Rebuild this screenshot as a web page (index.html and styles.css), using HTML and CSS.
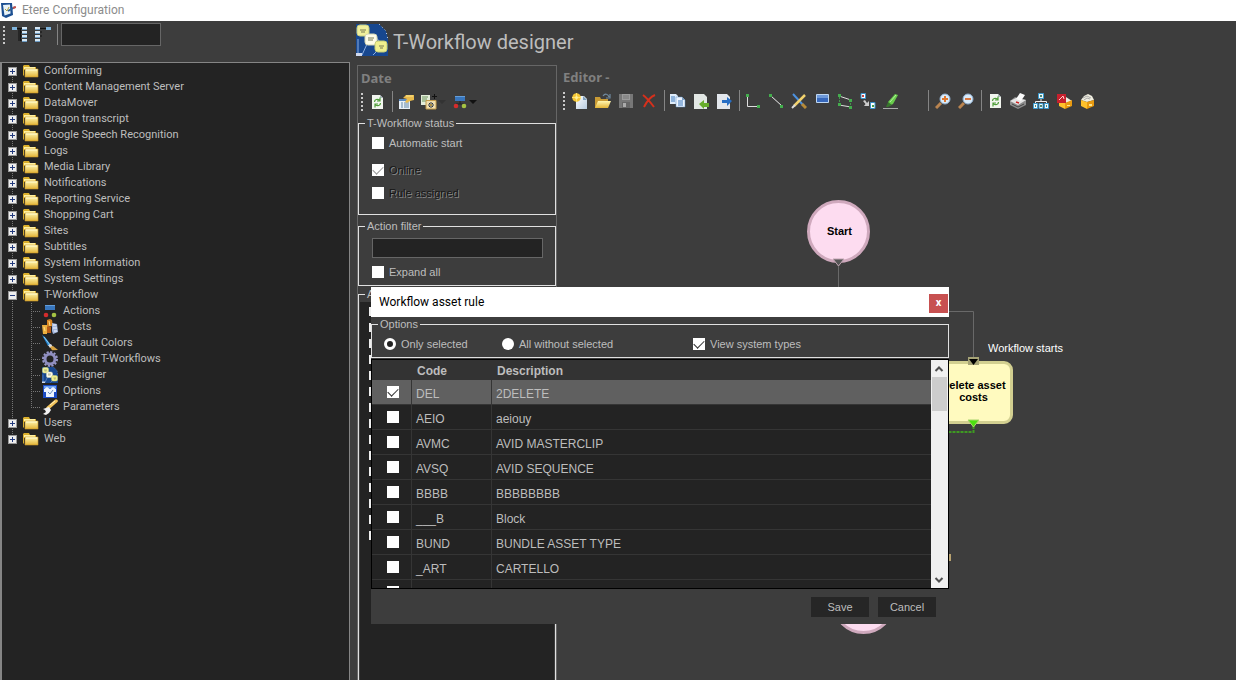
FILE: index.html
```html
<!DOCTYPE html>
<html lang="en">
<head>
<meta charset="utf-8">
<title>Etere Configuration</title>
<link rel="stylesheet" href="styles.css">
</head>
<body>
<svg class="sprite" aria-hidden="true">
  <defs>
    <linearGradient id="gold" x1="0" y1="0" x2="0" y2="1"><stop offset="0" stop-color="#fff6b0"/><stop offset="1" stop-color="#e3b437"/></linearGradient>
    <linearGradient id="sheet" x1="0" y1="0" x2="1" y2="1"><stop offset="0" stop-color="#fff"/><stop offset="1" stop-color="#b8cce0"/></linearGradient>
  </defs>
  <symbol id="app" viewBox="0 0 16 16"><path d="M1 1l11 0 1 12-7 3-4-2z" fill="#1c4f91"/><path d="M3 3l7-.5.5 9-6 2z" fill="#eaf3f6"/><path d="M5 7l2 2 2-4" stroke="#b3a13a" fill="none"/><path d="M8 9l7-4" stroke="#2b5f99" stroke-width="2"/><path d="M13 6l3-1" stroke="#c4504a" stroke-width="2"/></symbol>
  <symbol id="expand" viewBox="0 0 16 16"><path d="M5 1.500h6M7 2v12M8.500 2v12M8 5h4M8 9h4M8 13h4" stroke="#111" fill="none"/><path d="M0 0h5v3H0z" fill="#7fb4dc"/><path d="M10 0h5v3h-5zM10 4h5v3h-5zM10 8h5v3h-5zM10 12h5v3h-5z" fill="#d7e8f4"/><path d="M10 2h5v1h-5zM10 6h5v1h-5zM10 10h5v1h-5zM10 14h5v1h-5z" fill="#6d9cc4"/></symbol>
  <symbol id="collapse" viewBox="0 0 16 16"><path d="M5 1.500h6M5 5h2M5 9h2" stroke="#111" fill="none"/><path d="M11 0h5v3h-5z" fill="#7fb4dc"/><path d="M0 0h5v3H0zM0 4h5v3H0zM0 8h5v3H0zM0 12h5v3H0z" fill="#d7e8f4"/><path d="M0 2h5v1H0zM0 6h5v1H0zM0 10h5v1H0zM0 14h5v1H0z" fill="#6d9cc4"/></symbol>
  <symbol id="folder" viewBox="0 0 16 16"><path d="M0 3l1-1h5l1 2h6v3H1v6L0 12z" fill="#d9ae2c"/><path d="M1 4h11v2H1z" fill="#fff0a0"/><path d="M2 6h13v8H2z" fill="url(#gold)" stroke="#c7962a" stroke-width=".6"/><path d="M3 7h11" stroke="#fffbd2"/></symbol>
  <symbol id="action" viewBox="0 0 16 16"><path d="M8 6v4M4 10h8" stroke="#222"/><path d="M3 2h10v5H3z" fill="#3876bd"/><path d="M3 2h10v1H3z" fill="#659ed9"/><circle cx="4" cy="12" r="2.300" fill="#d42c2c"/><circle cx="12" cy="12" r="2.300" fill="#a5c343"/></symbol>
  <symbol id="costs" viewBox="0 0 16 16"><path d="M5 1l3-1 2 1 1 6-6 1z" fill="#d88522"/><path d="M0 6h5v9H1z" fill="#ebb040"/><path d="M5 8h4v6H5z" fill="#b85b16"/><path d="M7 2l1 5M2 8l1 4" stroke="#ffe087"/><path d="M10 4l5 1 1 8-5 2-1-3z" fill="#a5b8dd"/><path d="M11 6h3M11 9h4M12 12h3" stroke="#f5f8ff"/></symbol>
  <symbol id="brush" viewBox="0 0 16 16"><path d="M0 0l3 2 6 8-3 1z" fill="#2383cf"/><path d="M2 2l6 8" stroke="#91cdf2"/><path d="M6 10l3-1 2 3-3 1z" fill="#ddd"/><path d="M8 12l3-1 5 4-6 .2z" fill="#d9a440"/></symbol>
  <symbol id="gear" viewBox="0 0 16 16"><circle cx="8" cy="8" r="7" fill="none" stroke="#9a99ca" stroke-width="2" stroke-dasharray="2.200 1.460"/><circle cx="8" cy="8" r="5" fill="none" stroke="#8f8ec0" stroke-width="3"/></symbol>
  <symbol id="flow" viewBox="0 0 32 32"><path d="M0 0h23l7 7 2 8v17H0z" fill="#17478f"/><path d="M6 31L11 20M17 31l8-8M2 30V15M24 18l-7-8" stroke="#8caee0" fill="none"/><path d="M23 0l7 7 2 9" stroke="#cdddec" stroke-dasharray="1 3" fill="none"/><rect x="1" y="1" width="12" height="11" rx="3" fill="#f0f09c" stroke="#c6cb81"/><rect x="9" y="10" width="12" height="11" rx="3" fill="#fdfce8" stroke="#d4d6b4"/><rect x="19" y="17" width="12" height="11" rx="3" fill="#eff08d" stroke="#c5cc77"/><path d="M4 6h6M5 8h4M12 14h6M12 16h5M23 22h5M24 24h3" stroke="#777853"/><path d="M0 29h6v3H0z" fill="#cfd8ee"/></symbol>
  <symbol id="options" viewBox="0 0 16 16"><path d="M1 2h14v13H1z" fill="#1d4dc5"/><path d="M2 3h12v2H2z" fill="#6aa0f0"/><path d="M2 6l3-2 3 2 3-2 3 2v3h-2v5H4V9H2z" fill="#eef5ff"/><path d="M6 9l2 2 3-4" stroke="#6a8fc2" fill="none"/></symbol>
  <symbol id="wrench" viewBox="0 0 16 16"><path d="M6 9L14 2" stroke="#f2c45b" stroke-width="3.500" stroke-linecap="round"/><path d="M8 6l5-4" stroke="#fff3c4"/><path d="M1 10l3-1 3-1 2 3-2 3-3 2-3-1 3-2-1-2z" fill="#f2f2f2"/></symbol>
  <symbol id="refresh" viewBox="0 0 16 16"><path d="M3 1h8l3 3v11H3z" fill="#f1f5ee"/><path d="M11 1l3 3h-3z" fill="#aab8c0"/><path d="M5.500 8c0-3 3-3 5-2M11 3.500V7H8M11.500 9c0 3-3 3-5 2M6 13.500V10h3" stroke="#4e9d38" fill="none" stroke-width="1.200"/></symbol>
  <symbol id="props" viewBox="0 0 16 16"><path d="M1 5h11v10H1z" fill="#e9f0f7"/><path d="M1 5h11v2H1z" fill="#5d8cc2"/><path d="M3 9h2M6 9h5M3 11h2M6 11h5M3 13h2M6 13h5" stroke="#6388a8"/><path d="M5 4l3-3h8v5l-4 1-3 2-2-1 2-3z" fill="#e9bb4d"/><path d="M8 2h7" stroke="#ffe78d"/></symbol>
  <symbol id="newact" viewBox="0 0 16 16"><path d="M0 1h9v10H0z" fill="#e4edda"/><path d="M1 3h6M1 5h5M1 7h4" stroke="#6c945d"/><path d="M5 6.500h10v8.500H5z" fill="#f1dfae" stroke="#c29a4a"/><path d="M10 8v6M7 11h6M8 9l4 4M12 9l-4 4" stroke="#273347"/><circle cx="10" cy="11" r="1" fill="#dfb444"/><path d="M13.500 0v5M11 2.500h5" stroke="#111"/></symbol>
  <symbol id="new" viewBox="0 0 16 16"><path d="M4 3h8l3 3v10H4z" fill="url(#sheet)"/><path d="M11 3v4h4z" fill="#7d9fbd"/><circle cx="4.500" cy="4.500" r="4.300" fill="#f5c635"/><path d="M4.500 0v9M0 4.500h9" stroke="#ffe66f"/><circle cx="4.500" cy="4.500" r="1.500" fill="#fff099"/></symbol>
  <symbol id="open" viewBox="0 0 16 16"><path d="M0 4h5l1 2h7v9H0z" fill="#c99b35"/><path d="M3 8h13l-3 7H0z" fill="url(#gold)"/><path d="M8 3c2-3 5-2 6 1M15 1v4h-4" stroke="#708aa0" fill="none" stroke-width="1.200"/></symbol>
  <symbol id="save" viewBox="0 0 16 16"><path d="M1 1h14v14H1z" fill="#777"/><path d="M4 1h8v6H4z" fill="#9b9b9b"/><path d="M4 9h8v6H4z" fill="#666"/><path d="M5 10h3v4H5z" fill="#aaa"/><path d="M5 3h6M5 5h6" stroke="#777"/></symbol>
  <symbol id="delete" viewBox="0 0 16 16"><path d="M2 2c4 3 8 8 11 12M14 2C9 4 6 8 3 14" stroke="#d5301c" stroke-width="2" fill="none"/></symbol>
  <symbol id="copy" viewBox="0 0 16 16"><path d="M0 1h6l2 2v8H0z" fill="#dfecfa"/><path d="M6 4h6l3 3v7H6z" fill="#eef5ff" stroke="#5b8cc0" stroke-width=".5"/><path d="M1 4h4M1 6h4M1 8h4M8 8h5M8 10h5M8 12h5" stroke="#3d78bb"/><path d="M12 4v3h3z" fill="#7d9fc2"/></symbol>
  <symbol id="import" viewBox="0 0 16 16"><path d="M1 1h10l3 3v12H1z" fill="#e2e7e4"/><path d="M6 11l5-4v3h5v4h-5v2z" fill="#68ad2c"/></symbol>
  <symbol id="export" viewBox="0 0 16 16"><path d="M1 1h10l3 3v12H1z" fill="#e3e7ec"/><path d="M16 8l-5-4v3H6v3h5v3z" fill="#276ec4"/></symbol>
  <symbol id="corner" viewBox="0 0 16 16"><path d="M2.500 3v10.500H14" stroke="#ddd" fill="none"/><path d="M1 1h3v3H1zM12 12h3v3h-3z" fill="#43ad4d"/></symbol>
  <symbol id="line" viewBox="0 0 16 16"><path d="M3 3l11 10" stroke="#eee"/><path d="M1 1h3v3H1zM12 12h3v3h-3z" fill="#43ad4d"/></symbol>
  <symbol id="tools" viewBox="0 0 16 16"><path d="M2 1l11 12" stroke="#4c91df" stroke-width="2"/><path d="M11 11l4 4" stroke="#b68a38" stroke-width="3"/><path d="M3 13L14 2" stroke="#f2d26d" stroke-width="2.500"/><path d="M1 15l3-3" stroke="#ddd" stroke-width="2"/></symbol>
  <symbol id="box" viewBox="0 0 16 16"><path d="M2.500 1.500h12v8h-12z" fill="#3768bc" stroke="#bed7f2"/><path d="M3 2h11v3H3z" fill="#6e99d9"/></symbol>
  <symbol id="poly" viewBox="0 0 16 16"><path d="M2 3l12 4M2 12l12 2" stroke="#ddd"/><path d="M2.500 4v8M13.500 7v7" stroke="#46944e" stroke-dasharray="2 1"/><path d="M1 1h3v3H1zM12 6h3v3h-3zM1 10h3v3H1zM12 13h3v3h-3z" fill="#43ad4d"/></symbol>
  <symbol id="transfer" viewBox="0 0 16 16"><path d="M1 .500h4.500v5H1zM10.500 9.500H15v6h-4.500z" fill="#fff" stroke="#3b91c9"/><path d="M2 2h2v2H2z" fill="#c34444"/><path d="M12 12h2v2h-2z" fill="#479e46"/><path d="M3 8l2-1 2 3 2-2v5H4l1.500-2z" fill="#ccc"/></symbol>
  <symbol id="marker" viewBox="0 0 16 16"><path d="M5 9L12 1l3 1-5 9-4 2z" fill="#68cc4b"/><path d="M7 9l6-7" stroke="#b0f29d"/><path d="M5 9l4 3-4 2H3z" fill="#38752d"/><path d="M0 15.500h15" stroke="#aaa"/></symbol>
  <symbol id="zoomin" viewBox="0 0 16 16"><path d="M6 10l-5 5" stroke="#b98450" stroke-width="3"/><circle cx="10" cy="6" r="5" fill="#d9ebfa" stroke="#8daccc"/><path d="M10 3v6M7 6h6" stroke="#dd7830" stroke-width="2"/></symbol>
  <symbol id="zoomout" viewBox="0 0 16 16"><path d="M6 10l-5 5" stroke="#b98450" stroke-width="3"/><circle cx="10" cy="6" r="5" fill="#d9ebfa" stroke="#8daccc"/><path d="M7 6h6" stroke="#d87843" stroke-width="2"/></symbol>
  <symbol id="print" viewBox="0 0 16 16"><path d="M0 8l5-4 11 3v5l-8 4-8-4z" fill="#8d8d8d"/><path d="M0 8l6-3 10 2-8 5z" fill="#e4e4e4"/><path d="M6 6l4-6 5 2-4 6z" fill="#fafafa"/><path d="M2 11l6 3 6-3" stroke="#444" fill="none"/><path d="M6 9l3 1" stroke="#c22" stroke-width="1.500"/></symbol>
  <symbol id="tree" viewBox="0 0 16 16"><path d="M8 6v3M2.500 10V8.500h11V10" stroke="#eee" fill="none"/><path d="M5.500.500h5v5h-5zM.500 10.500h4v5h-4zM6 10.500h4v5H6zM11.500 10.500h4v5h-4z" fill="#eef8fc" stroke="#399bd0"/><path d="M7 2h2v2H7zM2 12h1v2H2zM7 12h2v2H7zM13 12h1v2h-1z" fill="#52856d"/></symbol>
  <symbol id="cube" viewBox="0 0 16 16"><path d="M2 7l3-4 4-2 4 2 2 4-7 2z" fill="#f0eee0"/><path d="M4 5l4-2 4 2M5 7l3-2 3 1" stroke="#aaa" fill="none"/><path d="M2 7l6 2v7l-6-3z" fill="#ffc12b"/><path d="M8 9l7-2v6l-7 3z" fill="#e89a10"/><path d="M10 11h3v2h-3z" fill="#ffe48a"/></symbol>
  <symbol id="redcube" viewBox="0 0 16 16"><path d="M4 8l6-4 6 4-6 2z" fill="#f0eee0"/><path d="M3 8l6 2v6l-6-3z" fill="#ffc12b"/><path d="M9 10l7-3v6l-7 3z" fill="#e89a10"/><path d="M11 12h3v1h-3z" fill="#ffe48a"/><path d="M1 1h9v9H1z" fill="#c5202d"/><path d="M3 7l4-4 1 3" stroke="#ffd2ce" fill="none"/></symbol>
</svg>

<header class="titlebar"><svg class="icon"><use href="#app"/></svg><span>Etere Configuration</span></header>

<main class="workspace">
  <aside class="sidebar">
    <div class="side-tools">
      <span class="grip"></span>
      <button class="tool" aria-label="Expand tree"><svg class="icon"><use href="#expand"/></svg></button>
      <button class="tool" aria-label="Collapse tree"><svg class="icon"><use href="#collapse"/></svg></button>
      <span class="sep"></span>
      <input class="field" type="text" aria-label="Search">
    </div>
    <ul class="tree">
      <li><a class="row" href="#"><i class="knob plus"></i><svg class="icon"><use href="#folder"/></svg>Conforming</a></li>
      <li><a class="row" href="#"><i class="knob plus"></i><svg class="icon"><use href="#folder"/></svg>Content Management Server</a></li>
      <li><a class="row" href="#"><i class="knob plus"></i><svg class="icon"><use href="#folder"/></svg>DataMover</a></li>
      <li><a class="row" href="#"><i class="knob plus"></i><svg class="icon"><use href="#folder"/></svg>Dragon transcript</a></li>
      <li><a class="row" href="#"><i class="knob plus"></i><svg class="icon"><use href="#folder"/></svg>Google Speech Recognition</a></li>
      <li><a class="row" href="#"><i class="knob plus"></i><svg class="icon"><use href="#folder"/></svg>Logs</a></li>
      <li><a class="row" href="#"><i class="knob plus"></i><svg class="icon"><use href="#folder"/></svg>Media Library</a></li>
      <li><a class="row" href="#"><i class="knob plus"></i><svg class="icon"><use href="#folder"/></svg>Notifications</a></li>
      <li><a class="row" href="#"><i class="knob plus"></i><svg class="icon"><use href="#folder"/></svg>Reporting Service</a></li>
      <li><a class="row" href="#"><i class="knob plus"></i><svg class="icon"><use href="#folder"/></svg>Shopping Cart</a></li>
      <li><a class="row" href="#"><i class="knob plus"></i><svg class="icon"><use href="#folder"/></svg>Sites</a></li>
      <li><a class="row" href="#"><i class="knob plus"></i><svg class="icon"><use href="#folder"/></svg>Subtitles</a></li>
      <li><a class="row" href="#"><i class="knob plus"></i><svg class="icon"><use href="#folder"/></svg>System Information</a></li>
      <li><a class="row" href="#"><i class="knob plus"></i><svg class="icon"><use href="#folder"/></svg>System Settings</a></li>
      <li><a class="row" href="#"><i class="knob"></i><svg class="icon"><use href="#folder"/></svg>T-Workflow</a>
        <ul class="branch">
          <li><a class="leaf" href="#"><svg class="icon"><use href="#action"/></svg>Actions</a></li>
          <li><a class="leaf" href="#"><svg class="icon"><use href="#costs"/></svg>Costs</a></li>
          <li><a class="leaf" href="#"><svg class="icon"><use href="#brush"/></svg>Default Colors</a></li>
          <li><a class="leaf" href="#"><svg class="icon"><use href="#gear"/></svg>Default T-Workflows</a></li>
          <li><a class="leaf" href="#"><svg class="icon"><use href="#flow"/></svg>Designer</a></li>
          <li><a class="leaf" href="#"><svg class="icon"><use href="#options"/></svg>Options</a></li>
          <li><a class="leaf" href="#"><svg class="icon"><use href="#wrench"/></svg>Parameters</a></li>
        </ul>
      </li>
      <li><a class="row" href="#"><i class="knob plus"></i><svg class="icon"><use href="#folder"/></svg>Users</a></li>
      <li><a class="row" href="#"><i class="knob plus"></i><svg class="icon"><use href="#folder"/></svg>Web</a></li>
    </ul>
  </aside>

  <section class="designer">
    <div class="heading"><svg class="logo"><use href="#flow"/></svg><h1>T-Workflow designer</h1></div>
    <div class="columns">
      <div class="panel">
        <h2>Date</h2>
        <div class="tools">
          <span class="grip"></span>
          <button class="tool" aria-label="Refresh"><svg class="icon"><use href="#refresh"/></svg></button>
          <span class="sep"></span>
          <button class="tool" aria-label="Properties"><svg class="icon"><use href="#props"/></svg></button>
          <button class="tool" aria-label="New action"><svg class="icon"><use href="#newact"/></svg></button>
          <i class="caret off"></i>
          <button class="tool" aria-label="Actions"><svg class="icon"><use href="#action"/></svg></button>
          <i class="caret"></i>
        </div>
        <fieldset class="group status">
          <legend>T-Workflow status</legend>
          <label class="auto"><input type="checkbox">Automatic start</label>
          <label class="dim"><input type="checkbox" checked disabled>Online</label>
          <label class="dim"><input type="checkbox" disabled>Rule assigned</label>
        </fieldset>
        <fieldset class="group filter">
          <legend>Action filter</legend>
          <input class="field" type="text" aria-label="Action filter">
          <label><input type="checkbox">Expand all</label>
        </fieldset>
        <fieldset class="group actions">
          <legend>A</legend>
          <div class="list">
            <i></i><i></i><i></i><i></i><i></i><i></i><i></i><i></i><i></i><i></i><i></i><i></i><i></i><i></i><i></i>
          </div>
        </fieldset>
      </div>

      <div class="editor">
        <h2>Editor -</h2>
        <div class="tools">
          <span class="grip"></span>
          <button class="tool" aria-label="New"><svg class="icon"><use href="#new"/></svg></button>
          <button class="tool" aria-label="Open"><svg class="icon"><use href="#open"/></svg></button>
          <button class="tool" aria-label="Save workflow"><svg class="icon"><use href="#save"/></svg></button>
          <button class="tool" aria-label="Delete"><svg class="icon"><use href="#delete"/></svg></button>
          <span class="sep"></span>
          <button class="tool" aria-label="Copy"><svg class="icon"><use href="#copy"/></svg></button>
          <button class="tool" aria-label="Import"><svg class="icon"><use href="#import"/></svg></button>
          <button class="tool" aria-label="Export"><svg class="icon"><use href="#export"/></svg></button>
          <span class="sep"></span>
          <button class="tool" aria-label="Corner link"><svg class="icon"><use href="#corner"/></svg></button>
          <button class="tool" aria-label="Straight link"><svg class="icon"><use href="#line"/></svg></button>
          <button class="tool" aria-label="Tools"><svg class="icon"><use href="#tools"/></svg></button>
          <button class="tool" aria-label="Box"><svg class="icon"><use href="#box"/></svg></button>
          <button class="tool" aria-label="Polygon"><svg class="icon"><use href="#poly"/></svg></button>
          <button class="tool" aria-label="Transfer"><svg class="icon"><use href="#transfer"/></svg></button>
          <button class="tool" aria-label="Highlight"><svg class="icon"><use href="#marker"/></svg></button>
          <span class="sep far"></span>
          <button class="tool" aria-label="Zoom in"><svg class="icon"><use href="#zoomin"/></svg></button>
          <button class="tool" aria-label="Zoom out"><svg class="icon"><use href="#zoomout"/></svg></button>
          <span class="sep"></span>
          <button class="tool" aria-label="Reload"><svg class="icon"><use href="#refresh"/></svg></button>
          <button class="tool" aria-label="Print"><svg class="icon"><use href="#print"/></svg></button>
          <button class="tool" aria-label="Hierarchy"><svg class="icon"><use href="#tree"/></svg></button>
          <button class="tool" aria-label="Export PDF"><svg class="icon"><use href="#redcube"/></svg></button>
          <button class="tool" aria-label="Package"><svg class="icon"><use href="#cube"/></svg></button>
        </div>
        <div class="canvas">
          <div class="node round start">Start</div>
          <div class="node round end"></div>
          <div class="node card">Delete asset costs</div>
          <span class="note">Workflow starts</span>
          <i class="spot"></i>
          <svg class="wires">
            <path d="M281.500 152v50M392 197.500h24.500V245" stroke="#696969" fill="none"/>
            <path d="M276 145h11l-5.500 7z" fill="#555" stroke="#c0a5b2"/>
            <path d="M411 243h11v8h-11z" fill="#a6a376"/><path d="M412 245h9l-4.500 6z" fill="#000"/>
            <path d="M416.500 312v6H392" stroke="#3f9a22" stroke-dasharray="3 1" fill="none" stroke-width="2"/>
            <path d="M411 306h11l-5.500 7z" fill="#4be010" stroke="#a8d56a"/>
          </svg>
        </div>
      </div>
    </div>
  </section>
</main>

<section class="dialog" role="dialog" aria-label="Workflow asset rule">
  <div class="dialog-title"><span>Workflow asset rule</span><button class="close" aria-label="Close">x</button></div>
  <fieldset class="group scope">
    <legend>Options</legend>
    <label class="only"><input type="radio" name="scope" checked>Only selected</label>
    <label class="without"><input type="radio" name="scope">All without selected</label>
    <label><input type="checkbox" checked>View system types</label>
  </fieldset>
  <div class="grid">
    <div class="grid-view">
      <table>
        <thead><tr><th class="pick"></th><th class="code">Code</th><th>Description</th></tr></thead>
        <tbody>
          <tr class="current"><td><input type="checkbox" checked aria-label="DEL"></td><td>DEL</td><td>2DELETE</td></tr>
          <tr><td><input type="checkbox" aria-label="AEIO"></td><td>AEIO</td><td>aeiouy</td></tr>
          <tr><td><input type="checkbox" aria-label="AVMC"></td><td>AVMC</td><td>AVID MASTERCLIP</td></tr>
          <tr><td><input type="checkbox" aria-label="AVSQ"></td><td>AVSQ</td><td>AVID SEQUENCE</td></tr>
          <tr><td><input type="checkbox" aria-label="BBBB"></td><td>BBBB</td><td>BBBBBBBB</td></tr>
          <tr><td><input type="checkbox" aria-label="___B"></td><td>___B</td><td>Block</td></tr>
          <tr><td><input type="checkbox" aria-label="BUND"></td><td>BUND</td><td>BUNDLE ASSET TYPE</td></tr>
          <tr><td><input type="checkbox" aria-label="_ART"></td><td>_ART</td><td>CARTELLO</td></tr>
          <tr><td><input type="checkbox" aria-label="Next type"></td><td></td><td></td></tr>
        </tbody>
      </table>
    </div>
    <div class="scroll">
      <button aria-label="Scroll up"><svg viewBox="0 0 16 17"><path d="M4.500 11L8 7.500 11.500 11" fill="none" stroke="#505050" stroke-width="2"/></svg></button>
      <div class="thumb"></div>
      <button aria-label="Scroll down"><svg viewBox="0 0 16 17"><path d="M4.500 7L8 10.500 11.500 7" fill="none" stroke="#505050" stroke-width="2"/></svg></button>
    </div>
  </div>
  <div class="dialog-foot"><button>Save</button><button>Cancel</button></div>
</section>
</body>
</html>
```

FILE: styles.css
```css
* { box-sizing: border-box; }
body {
  margin: 0;
  min-height: 100vh;
  display: flex;
  flex-direction: column;
  position: relative;
  overflow: hidden;
  background: #3d3d3d;
  color: #bdbdbd;
  font: 11px/16px "Liberation Sans", Arial, sans-serif;
}
button, input { font: inherit; color: inherit; margin: 0; padding: 0; border: 0; }
button { background: none; }
ul { list-style: none; margin: 0; padding: 0; }
h1, h2 { margin: 0; }
i { flex: none; }
.sprite { position: absolute; width: 0; height: 0; }
.icon { width: 16px; height: 16px; display: block; flex: none; }

.titlebar {
  display: flex;
  align-items: center;
  gap: 6px;
  height: 21px;
  padding-bottom: 2px;
  background: #fff;
  color: #8c8c8c;
  font: 12px/18px Roboto, sans-serif;
}

.workspace { flex: 1; display: flex; }
.sidebar { width: 350px; flex: none; display: flex; flex-direction: column; }
.side-tools { display: flex; align-items: center; gap: 7px; height: 41px; padding: 0 3px 14px; }
.side-tools .sep { margin: 0 -4px 0 -1px; }
.field { background: #232323; border: 1px solid #666; height: 23px; width: 100px; padding: 0 4px; }

.grip { width: 2px; height: 18px; flex: none; background: repeating-linear-gradient(#c9c9c9 0 2px, transparent 2px 4px); }
.sep { width: 1px; height: 21px; flex: none; margin-right: -2px; background: #858585; }
.sep.far { margin-left: 22px; margin-right: -1px; }
.tool { width: 16px; height: 16px; flex: none; }

.tree {
  flex: 1;
  background: #232323;
  border: 1px solid #858585;
  border-bottom: 0;
  border-left-width: 2px;
  font-family: Roboto, sans-serif;
}
.row, .leaf { display: flex; align-items: center; height: 16px; color: inherit; text-decoration: none; }
.row { padding-left: 6px; }
.row .icon { margin: 0 5px 0 6px; }
.tree > li { background: repeating-linear-gradient(#777 0 1px, transparent 1px 2px) 10px 0 / 1px 100% no-repeat; }
.tree > li:first-child { background-position: 10px 8px; }
.tree > li:last-child { background-size: 1px 8px; }
.knob {
  width: 9px;
  height: 9px;
  border: 1px solid #999;
  background: linear-gradient(#223a7c, #223a7c) center / 5px 1px no-repeat #eee;
}
.knob.plus {
  background: linear-gradient(#223a7c, #223a7c) center / 5px 1px no-repeat, linear-gradient(#223a7c, #223a7c) center / 1px 5px no-repeat #eee;
}
.branch li { padding-left: 29px; background: repeating-linear-gradient(#777 0 1px, transparent 1px 2px) 29px 0 / 1px 100% no-repeat; }
.branch li:last-child { background-size: 1px 8px; }
.leaf { gap: 5px; }
.leaf::before { content: ""; width: 10px; height: 1px; margin-right: -4px; background: repeating-linear-gradient(90deg, #777 0 1px, transparent 1px 2px); }

.designer { flex: 1; min-width: 0; display: flex; flex-direction: column; }
.heading { display: flex; align-items: center; gap: 5px; height: 44px; padding: 0 6px 6px; }
.logo { width: 32px; height: 32px; }
h1 { font: 20px/32px Roboto, sans-serif; padding-top: 4px; }
h2 { font: bold 13px/20px "Noto Sans", sans-serif; color: #808080; padding: 2px 3px 0; }
.columns { flex: 1; display: flex; padding-left: 7px; }

.panel { width: 200px; flex: none; display: flex; flex-direction: column; border: 1px solid #666; border-bottom: 0; }
.tools { display: flex; align-items: center; gap: 7px; height: 27px; padding: 0 4px; }
.panel .tools { padding-left: 3px; }
.panel .grip { margin-right: -1px; }
.caret { width: 0; border: 4px solid transparent; border-top-color: #111; border-bottom: 0; margin: 0 0 0 -6px; }
.caret.off { border-top-color: #333; margin-right: -1px; }

.group { min-width: 0; margin: 0; padding: 0 12px 0 13px; border: 1px solid #e0e0e0; }
.group legend { padding: 0 2px; margin-left: -7px; line-height: 16px; }
.group label { display: flex; align-items: center; gap: 5px; height: 16px; }
.status { height: 100px; }
.status .auto { margin: 4px 0 11px; }
.status .dim { margin-bottom: 7px; }
.dim { color: #161616; text-shadow: 1px 1px 0 #8a8a8a; }
.filter { height: 68px; margin-top: 3px; }
.filter .field { display: block; width: 100%; height: 20px; margin: 4px 0 6px; }
.actions { flex: 1; padding: 0 1px; border-bottom: 0; display: flex; flex-direction: column; }
.actions legend { margin-left: 5px; }
.list { flex: 1; background: #232323; padding: 5px 9px; display: flex; flex-direction: column; gap: 7px; }
.list i { width: 9px; height: 9px; background: #eee; }

input[type="checkbox"], input[type="radio"] {
  appearance: none;
  width: 12px;
  height: 12px;
  flex: none;
  display: grid;
  place-items: center;
  background: #fff;
}
input[type="checkbox"]:checked::before {
  content: "";
  width: 9px;
  height: 5px;
  border: solid #333;
  border-width: 0 0 1px 1px;
  transform: translateY(-1px) rotate(-45deg);
}
input[type="checkbox"]:disabled::before { border-color: #999; }
input[type="radio"] { border-radius: 50%; }
input[type="radio"]:checked { background: #222; border: 3px solid #fff; }

.editor { flex: 1; min-width: 0; display: flex; flex-direction: column; }
.editor h2, .editor .tools { padding-left: 6px; }
.canvas { flex: 1; position: relative; overflow: hidden; }
.wires { position: absolute; left: 0; top: 0; width: 100%; height: 100%; }
.node {
  position: absolute;
  display: flex;
  align-items: center;
  justify-content: center;
  text-align: center;
  color: #000;
  font-weight: bold;
  line-height: 12px;
}
.round { width: 63px; height: 63px; border: 3px solid #cfa9bd; border-radius: 50%; background: #fddcf0; }
.start { left: 250px; top: 86px; padding: 0 0 2px 2px; }
.end { left: 275px; top: 457px; }
.card { left: 377px; top: 247px; width: 79px; height: 63px; padding-bottom: 4px; border: 3px solid #d2cf90; border-radius: 9px; background: #fffabf; }
.note { position: absolute; left: 431px; top: 226px; color: #fff; }
.spot { position: absolute; left: 392px; top: 440px; width: 2px; height: 7px; background: #b8a270; }

.dialog { position: absolute; left: 371px; top: 287px; width: 578px; background: #3d3d3d; }
.dialog-title {
  display: flex;
  align-items: center;
  justify-content: space-between;
  height: 30px;
  padding: 0 1px 0 8px;
  background: #fff;
  color: #000;
  font: 12px/20px Roboto, sans-serif;
}
.close { width: 19px; height: 19px; margin-top: 2px; background: #c75050; color: #fff; font-weight: bold; font-size: 11px; line-height: 16px; }
.scope { display: flex; align-items: center; height: 42px; padding: 0 12px 2px; margin-top: -1px; margin-bottom: 1px; }
.scope legend { margin-left: -6px; }
.scope .only { width: 118px; }
.scope .without { width: 191px; }

.grid { display: flex; height: 230px; border: 1px solid #000; }
.grid-view { flex: 1; min-width: 0; overflow: hidden; background: #232323; }
table { width: 100%; border-collapse: separate; border-spacing: 0; table-layout: fixed; font-size: 12px; }
th { height: 20px; padding: 2px 0 0 5px; background: #333; text-align: left; line-height: 16px; }
.pick { width: 40px; }
.code { width: 80px; }
td { height: 25px; padding: 4px 0 0 4px; border-bottom: 1px solid #353535; border-right: 1px solid #353535; line-height: 16px; }
td:first-child { padding: 0 0 1px 15px; }
td:last-child { border-right: 0; }
.current td { background: #606060; }
.scroll { width: 17px; flex: none; display: flex; flex-direction: column; background: #f0f0f0; }
.scroll button { height: 17px; flex: none; }
.scroll svg { display: block; width: 16px; height: 17px; }
.thumb { width: 15px; height: 34px; background: #cdcdcd; margin: 0 1px auto; }
.dialog-foot { display: flex; justify-content: flex-end; gap: 9px; padding: 8px 13px 7px; }
.dialog-foot button { width: 58px; height: 20px; background: #262626; }
```
